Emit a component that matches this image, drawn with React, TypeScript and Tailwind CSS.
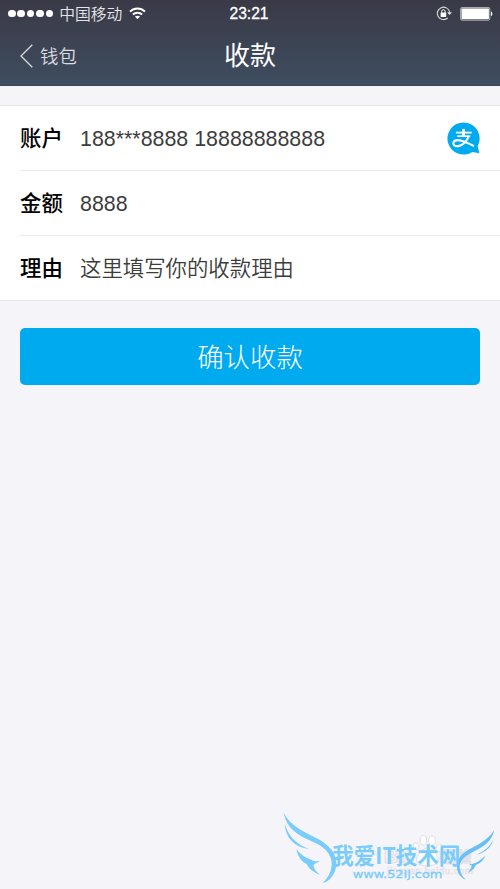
import type { ReactNode } from 'react'

type Field = {
  label: string
  value: string
  icon?: ReactNode
}

function WifiIcon() {
  return (
    <svg width="17" height="13" viewBox="0 0 17 13" fill="none" stroke="#fff" strokeWidth="2">
      <path d="M1 4.6 C5.2 0.5 11.8 0.5 16 4.6" />
      <path d="M3.9 7.5 C6.5 5.1 10.5 5.1 13.1 7.5" />
      <path d="M5.9 9.6 C7.3 8.3 9.7 8.3 11.1 9.6 L8.5 12.3 Z" fill="#fff" stroke="none" />
    </svg>
  )
}

function RotationLockIcon() {
  return (
    <svg width="16" height="15" viewBox="0 0 16 15" fill="none">
      <path d="M13.6 6 A6.2 6.2 0 1 0 11.7 12" stroke="#d7d8dc" strokeWidth="1.1" />
      <path d="M11.1 6.3 H15.9 L13.5 9.1 Z" fill="#eee" />
      <rect x="4.6" y="6.5" width="5.6" height="4.4" rx="0.4" fill="#fff" />
      <path d="M5.7 6.8 V5.4 A1.7 1.7 0 0 1 9.1 5.4 V6.8" stroke="#fff" strokeWidth="1" />
    </svg>
  )
}

function BatteryIcon() {
  return (
    <svg width="33" height="14" viewBox="0 0 33 14">
      <rect x="0.6" y="0.6" width="29.2" height="12.6" rx="1.6" fill="none" stroke="#a9abb1" strokeWidth="1.1" />
      <rect x="1.5" y="1.5" width="27.4" height="10.8" rx="0.8" fill="#fff" />
      <path d="M31 4.6 C32.8 5 32.8 8.8 31 9.2 Z" fill="#fff" />
    </svg>
  )
}

function AlipayIcon() {
  return (
    <svg width="34" height="34" viewBox="0 0 34 34" fill="none">
      <path d="M16.5 0.4 A16.1 16.1 0 0 1 30.7 24.2 L32.3 31.2 L25.3 30 A16.1 16.1 0 1 1 16.5 0.4 Z" fill="#00aaef" />
      <g stroke="#fff" strokeLinecap="butt">
        <path d="M8.9 10.6 H24.7" strokeWidth="1.8" />
        <path d="M16.5 6.9 V14.2" strokeWidth="2.8" />
        <path d="M10.2 14.2 H23.2" strokeWidth="1.7" />
        <path
          d="M21.8 14 C20.4 18.3 16.2 23.6 11.2 24.1 C7.4 24.4 5.6 22.6 6.5 20.3 C7.6 17.6 11.9 17.9 16 19.3 C19.5 20.5 23 22.2 27 24"
          strokeWidth="2.1"
        />
      </g>
    </svg>
  )
}

function Watermark() {
  return (
    <svg className="absolute right-0 bottom-0 pointer-events-none" width="230" height="89" viewBox="0 0 690 267">
      {/* paw badge */}
      <g fill="#fff" stroke="#dedee3" strokeWidth="3">
        <ellipse cx="438" cy="139" rx="8" ry="11" transform="rotate(-25 438 139)" />
        <ellipse cx="460" cy="121" rx="10" ry="15" />
        <ellipse cx="486" cy="122" rx="10" ry="14" />
        <ellipse cx="508" cy="144" rx="9" ry="12" transform="rotate(25 508 144)" />
        <path d="M472 145 C492 145 514 178 500 191 C490 199 454 199 444 191 C430 178 452 145 472 145 Z" />
      </g>
      <g fill="#f7f7fa" stroke="#dedee3" strokeWidth="3" fontFamily="'Liberation Sans', 'Noto Sans CJK SC', sans-serif">
        <text x="342" y="190" fontSize="58" fontWeight="700" textLength="84">Bai</text>
        <text x="510" y="186" fontSize="46" fontWeight="700" textLength="94">经验</text>
        <text x="352" y="221" fontSize="28" strokeWidth="1.5" textLength="256">jingyan.baidu.com</text>
      </g>

      {/* wings */}
      <g fill="#7accfb">
        <path d="M41 38 C61 78 101 94 139 114 C177 134 201 160 199 194 C196 225 178 243 158 250 C179 228 185 211 185 190 C185 157 157 137 122 122 C81 104 49 84 41 38 Z" />
        <path d="M44 72 C56 108 77 132 117 147 C75 142 47 116 44 72 Z" />
        <path d="M79 147 C91 163 106 174 124 179 C131 184 140 184 149 183 C141 189 132 190 130 197 C132 208 141 216 150 224 C130 217 117 207 110 192 C94 186 84 169 79 147 Z" />
      </g>
      <g fill="#67bff7">
        <path d="M673 89 C665 125 642 139 612 154 C582 169 567 185 569 204 C571 220 578 232 588 239 C569 232 560 216 561 195 C563 167 588 153 615 139 C643 124 662 108 673 89 Z" />
        <path d="M670 116 C664 143 645 158 621 163 C644 153 661 139 670 116 Z" />
        <path d="M646 167 C640 182 629 190 618 194 C614 205 605 212 594 218 C600 210 605 203 605 197 C602 193 599 193 595 192 C615 194 629 182 646 167 Z" />
      </g>

      <g fill="#7accfb" fontFamily="'Noto Sans CJK SC', sans-serif">
        <text x="187" y="192" fontSize="67" fontWeight="700" textLength="384" lengthAdjust="spacingAndGlyphs">我爱IT技术网</text>
        <text
          x="248" y="233" fontSize="34" fontFamily="'DejaVu Sans', sans-serif"
          stroke="#7accfb" strokeWidth="1" textLength="269" lengthAdjust="spacingAndGlyphs"
        >
          www.52ij.com
        </text>
      </g>
    </svg>
  )
}

const FIELDS: Field[] = [
  { label: '账户', value: '188***8888 18888888888', icon: <AlipayIcon /> },
  { label: '金额', value: '8888' },
  { label: '理由', value: '这里填写你的收款理由' },
]

function FieldRow({ field, first }: { field: Field; first: boolean }) {
  return (
    <label className={`flex items-center pt-0.5 pr-[19px] ${first ? 'h-[64px]' : 'h-[65px] border-t border-[#e9e9e9]'}`}>
      <span className="w-[60px] shrink-0 text-[21.4px] font-medium text-black">{field.label}</span>
      <span className="flex-1 text-[21.4px] font-[350] whitespace-nowrap text-[#3c3c3c]">{field.value}</span>
      {field.icon}
    </label>
  )
}

export default function App() {
  return (
    <main className="relative h-[889px] w-[500px] overflow-hidden bg-[#f4f4f9] font-['Liberation_Sans','Noto_Sans_CJK_SC',sans-serif]">
      <header className="h-[86px] border-b border-[#394656] bg-linear-to-b from-[#3a3a47] to-[#3e4d60] text-white">
        {/* Status bar */}
        <div className="grid h-[27px] grid-cols-3 items-center pr-[7px] pl-2">
          <div className="flex items-center">
            <div className="flex gap-[1.7px]">
              {[0, 1, 2, 3, 4].map(i => (
                <span key={i} className="size-[7.7px] rounded-full bg-white" />
              ))}
            </div>
            <span className="mr-[7px] ml-[6px] pt-0.5 text-[15.8px] leading-none font-[350] whitespace-nowrap text-[#e4e5e8]">中国移动</span>
            <WifiIcon />
          </div>
          <span className="pr-[3px] pt-px text-center text-[15.6px] font-medium [-webkit-text-stroke:0.3px_white]">23:21</span>
          <div className="flex items-center justify-end gap-2">
            <RotationLockIcon />
            <BatteryIcon />
          </div>
        </div>

        {/* Navigation bar */}
        <nav className="grid h-[58px] grid-cols-3 items-center pr-5 pl-5">
          <button className="flex items-center gap-[7px] text-[#dcdee2]">
            <svg width="13" height="24" viewBox="0 0 13 24" fill="none" stroke="currentColor" strokeWidth="1.3">
              <path d="M12.3 0.8 L1 12 L12.3 23.2" />
            </svg>
            <span className="pt-0.5 text-[18.4px] leading-none font-[350]">钱包</span>
          </button>
          <h1 className="text-center text-[26px] leading-none">收款</h1>
        </nav>
      </header>

      <section className="mt-[19px] border-y border-[#e7e7ea] bg-white pl-5">
        {FIELDS.map((f, i) => (
          <FieldRow key={f.label} field={f} first={i === 0} />
        ))}
      </section>

      <div className="px-5 pt-[27px]">
        <button className="h-[57px] w-full rounded-[5px] bg-[#00aaef] pt-1 text-[26.4px] font-light text-white">确认收款</button>
      </div>

      <Watermark />
    </main>
  )
}
